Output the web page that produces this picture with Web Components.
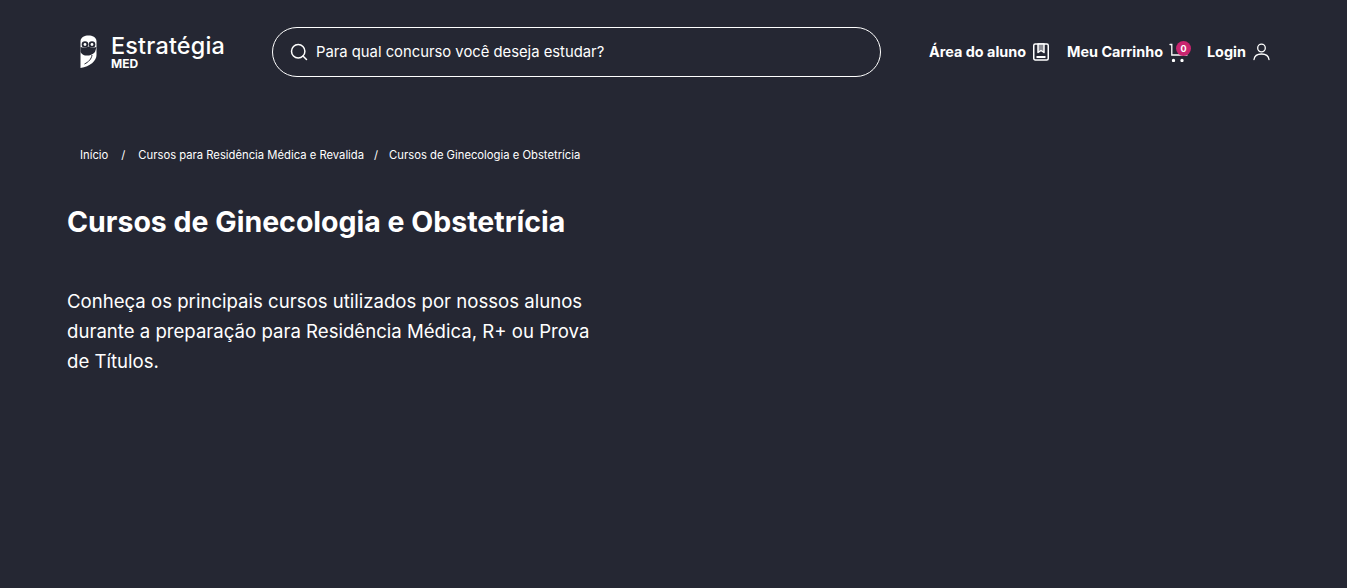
<!DOCTYPE html>
<html lang="pt-BR">
<head>
<meta charset="utf-8">
<title>Cursos de Ginecologia e Obstetrícia</title>
<style>
  html, body { margin: 0; height: 100%; background: #252733; overflow: hidden; }
  body { font-family: Inter, "Liberation Sans", sans-serif; color: #fff; }
</style>
</head>
<body>
<site-header></site-header>
<crumb-trail>
  <a href="#">Início</a>
  <a href="#">Cursos para Residência Médica e Revalida</a>
  <a href="#">Cursos de Ginecologia e Obstetrícia</a>
</crumb-trail>
<page-intro>
  <span slot="title">Cursos de Ginecologia e Obstetrícia</span>
  Conheça os principais cursos utilizados por nossos alunos durante a preparação para Residência Médica, R+ ou Prova de Títulos.
</page-intro>

<script>
class SiteLogo extends HTMLElement {
  constructor() {
    super();
    this.attachShadow({ mode: 'open' });
    this.shadowRoot.innerHTML = `
      <style>
        :host { display: flex; align-items: center; gap: 14px; width: 145px; flex: none; }
        svg { display: block; flex: none; }
        .words { display: flex; flex-direction: column; padding-top: 2px; }
        .name { font-size: 23.400px; line-height: 22px; font-weight: 500; letter-spacing: 0.200px; }
        .sub { font-size: 12px; line-height: 12px; font-weight: 700; margin-top: 1px; }
      </style>
      <svg width="17" height="33" viewBox="0 0 17 33">
        <path fill="#fff" d="M0.500 6 C1 2 4.500 0.500 8.500 0.500 C12.500 0.500 16 2 16.500 6 L16.500 20 C16.500 26 10 31.500 0.500 33Z"/>
        <path fill="#252733" d="M0.500 12 L5 13 L8.500 11.500 L12 13 L16.500 12 L15 17 C12 20 9 21 5 20.500 C3 20 1.500 19 0.500 17Z"/>
        <path fill="none" stroke="#252733" stroke-width="1" d="M12 20 C11.500 24 8.500 27 4.500 29"/>
        <circle cx="5" cy="9.500" r="3.300" fill="#252733"/>
        <circle cx="12" cy="9.500" r="3.300" fill="#252733"/>
        <circle cx="5" cy="9.500" r="1.400" fill="#fff"/>
        <circle cx="12" cy="9.500" r="1.400" fill="#fff"/>
      </svg>
      <div class="words">
        <span class="name">Estratégia</span>
        <span class="sub">MED</span>
      </div>
    `;
  }
}

class SearchBox extends HTMLElement {
  constructor() {
    super();
    this.attachShadow({ mode: 'open' });
    this.shadowRoot.innerHTML = `
      <style>
        :host {
          display: flex; align-items: center; gap: 8px; flex: none;
          width: 590px; height: 48px; padding-left: 17px;
          border: 1px solid #fff; border-radius: 25px;
          font-size: 14.800px;
        }
        svg { display: block; flex: none; }
      </style>
      <svg width="18" height="18" viewBox="0 0 18 18" fill="none" stroke="#fff" stroke-width="1.500" stroke-linecap="round">
        <circle cx="8.200" cy="8.200" r="6.700"/>
        <path d="M13 13 L16.500 16.500"/>
      </svg>
      <span>Para qual concurso você deseja estudar?</span>
    `;
  }
}

class NavLink extends HTMLElement {
  constructor() {
    super();
    this.attachShadow({ mode: 'open' });
    this.shadowRoot.innerHTML = `
      <style>
        :host { display: flex; align-items: center; gap: 6px; font-size: 14.400px; font-weight: 700; position: relative; white-space: nowrap; }
        ::slotted(svg) { display: block; }
      </style>
      <slot></slot>
      <slot name="icon"></slot>
    `;
  }
}

class SiteHeader extends HTMLElement {
  constructor() {
    super();
    this.attachShadow({ mode: 'open' });
    this.shadowRoot.innerHTML = `
      <style>
        :host { display: flex; align-items: center; height: 103px; padding-left: 80px; box-sizing: border-box; }
        nav { display: flex; align-items: center; gap: 17px; margin-left: 48px; }
        .badge {
          position: absolute; right: -1px; top: -1px; width: 15px; height: 15px; border-radius: 50%;
          background: #c9246f; font-size: 9px; line-height: 15px; text-align: center; font-weight: 700;
        }
        svg { display: block; flex: none; }
      </style>
      <site-logo></site-logo>
      <search-box style="margin-left:47px"></search-box>
      <nav>
        <nav-link>Área do aluno
          <svg slot="icon" width="18" height="18" viewBox="0 0 18 18" fill="none" stroke="#fff" stroke-width="1.500" stroke-linejoin="round">
            <rect x="1.750" y="1" width="14.500" height="16" rx="1.500"/>
            <path d="M4.500 14 H13.500" stroke-width="2"/>
            <path d="M6 1 V9.500 L9 7.500 L12 9.500 V1Z" fill="#8a8b93"/>
          </svg>
        </nav-link>
        <nav-link>Meu Carrinho
          <svg slot="icon" width="21" height="20" viewBox="0 0 21 20" fill="none" stroke="#fff" stroke-width="1.300" stroke-linecap="round">
            <path d="M1 2.500 H2.800 V13 H18"/>
            <circle cx="4.500" cy="18.500" r="1" fill="#fff"/>
            <circle cx="13" cy="18.500" r="1" fill="#fff"/>
          </svg>
          <span slot="icon" class="badge">0</span>
        </nav-link>
        <nav-link>Login
          <svg slot="icon" width="19" height="18" viewBox="0 0 19 18" fill="none" stroke="#fff" stroke-width="1.300" stroke-linecap="round">
            <circle cx="9.500" cy="5" r="3.800"/>
            <path d="M2 16.500 C2.500 12.500 5.500 11 9.500 11 C13.500 11 16.500 12.500 17 16.500"/>
          </svg>
        </nav-link>
      </nav>
    `;
  }
}

class CrumbTrail extends HTMLElement {
  constructor() {
    super();
    this.attachShadow({ mode: 'open' });
    this.shadowRoot.innerHTML = `
      <style>
        :host { display: flex; align-items: center; gap: 10px; padding: 44px 0 0 80px; font-size: 11.250px; line-height: 16px; }
        ::slotted(a) { color: #fff; text-decoration: none; }
      </style>
      <slot></slot>
    `;
  }
  connectedCallback() {
    // slashes go between the links, as real text
    const links = [...this.querySelectorAll('a')];
    links.slice(1).forEach((a, i) => {
      const s = document.createElement('span');
      s.textContent = '/';
      s.style.paddingRight = '1px';
      if (i === 0) s.style.padding = '0 3px 0 3px';
      a.before(s);
    });
  }
}

class PageIntro extends HTMLElement {
  constructor() {
    super();
    this.attachShadow({ mode: 'open' });
    this.shadowRoot.innerHTML = `
      <style>
        :host { display: block; padding-left: 67px; }
        h1 { margin: 42px 0 0; font-size: 28.500px; line-height: 34px; font-weight: 700; }
        p { margin: 47px 0 0; width: 540px; font-size: 18.600px; line-height: 30px; }
      </style>
      <h1><slot name="title"></slot></h1>
      <p><slot></slot></p>
    `;
  }
}

customElements.define('site-logo', SiteLogo);
customElements.define('search-box', SearchBox);
customElements.define('nav-link', NavLink);
customElements.define('site-header', SiteHeader);
customElements.define('crumb-trail', CrumbTrail);
customElements.define('page-intro', PageIntro);
</script>
</body>
</html>
